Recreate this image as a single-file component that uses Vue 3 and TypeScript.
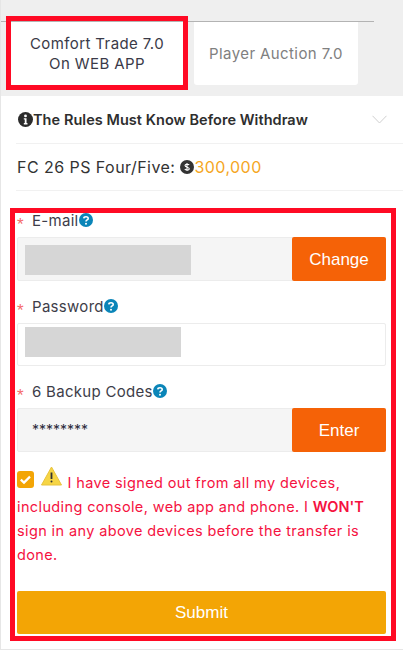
<script setup lang="ts">
import { ref } from "vue";

const activeTab = ref(0);
const tabs = [
  { id: 0, lines: ["Comfort Trade 7.0", "On WEB APP"] },
  { id: 1, lines: ["Player Auction 7.0"] },
];
</script>

<style>
html, body {
  margin: 0;
  background: #fff;
}
</style>

<style scoped>
.page {
  position: relative;
  width: 403px;
  height: 650px;
  overflow: hidden;
  box-sizing: border-box;
  padding-left: 1px;
  background: #e6e6e6;
  font-family: "Inter", "Open Sans", sans-serif;
  color: #333;
}
.top {
  height: 96px;
  box-sizing: border-box;
  background: #efefef;
  padding-top: 21px;
}
.top-inner {
  width: 373px;
  border-top: 1px solid #b3b3b3;
  display: flex;
  gap: 10px;
  padding-left: 9px;
  box-sizing: border-box;
}
.tab {
  flex: none;
  width: 164px;
  height: 63px;
  border-radius: 0 0 3px 3px;
  background: #fff;
  color: #808080;
  font-size: 15px;
  letter-spacing: 0.4px;
  line-height: 20px;
  display: flex;
  flex-direction: column;
  align-items: center;
  justify-content: center;
}
.tab.active {
  width: 174px;
  color: #3a3a48;
}
.panel {
  background: #fff;
  height: 553px;
  padding: 0 0 0 15px;
}
.rules {
  height: 48px;
  display: flex;
  align-items: center;
  border-bottom: 1px solid #f1f1f1;
  box-sizing: border-box;
  padding: 0 16px 0 2px;
  font-weight: 600;
  font-size: 14.5px;
  letter-spacing: 0.05px;
  color: #2e2e2e;
}
.rules svg {
  flex: none;
}
.rules .chev {
  margin-left: auto;
}
.price {
  height: 47px;
  display: flex;
  align-items: center;
  border-bottom: 1px solid #f1f1f1;
  box-sizing: border-box;
  padding-left: 1px;
  font-size: 16px;
  letter-spacing: 0.45px;
}
.price .coin {
  margin-left: 5px;
  flex: none;
}
.price b {
  font-weight: 400;
  color: #f5a623;
}
.form {
  width: 369px;
  margin-left: 1px;
  padding-top: 18px;
}
.label {
  display: flex;
  align-items: center;
  height: 22px;
  font-size: 15px;
  letter-spacing: 0.3px;
  color: #3d3d49;
}
.label i {
  width: 15px;
  height: 15px;
  font-style: normal;
  color: #f56c6c;
  font-size: 17px;
  line-height: 23px;
  font-family: "Liberation Sans", sans-serif;
}
.field {
  height: 44px;
  display: flex;
  box-sizing: border-box;
  margin: 6px 0 14px;
  border: 1px solid #ececec;
  border-radius: 2px;
  background: #f5f5f5;
}
.field.plain {
  background: #fff;
  height: 43px;
}
.blank {
  margin: 7px 0 0 7px;
  height: 30px;
  background: #d6d6d6;
}
.plain .blank {
  margin-top: 3px;
}
.w1 { width: 166px; }
.w2 { width: 156px; }
.code {
  padding: 12px 0 0 14px;
  font-size: 14px;
  color: #2a2a3a;
}
.field button {
  margin: -1px -1px -1px auto;
  width: 94px;
  border: 0;
  border-radius: 2px;
  padding: 2px 0 0;
  background: #f56207;
  color: #fff;
  font-family: "Liberation Sans", sans-serif;
  font-size: 17px;
}
.agree {
  margin: 4px 0 0;
  font-size: 14.5px;
  line-height: 24px;
  letter-spacing: 0.38px;
  color: #f5123f;
}
.agree strong {
  font-weight: 600;
  letter-spacing: 0;
}
.check {
  display: inline-block;
  vertical-align: 0;
  margin-right: 7px;
}
.warn {
  display: inline-block;
  vertical-align: 2px;
  margin-right: 1px;
}
.submit {
  display: block;
  width: 100%;
  height: 43px;
  margin-top: 24px;
  border: 0;
  border-radius: 2px;
  background: #f3a505;
  color: #fff;
  font-family: "Liberation Sans", sans-serif;
  font-size: 17px;
}
.mark {
  position: absolute;
  border: 5px solid #ff0a24;
  box-sizing: border-box;
  pointer-events: none;
}
.mark-tab {
  left: 6px;
  top: 16px;
  width: 182px;
  height: 74px;
}
.mark-form {
  left: 10px;
  top: 208px;
  width: 386px;
  height: 433px;
}
</style>

<template>
  <div class="page">
    <div class="top">
      <div class="top-inner">
        <div v-for="tab in tabs" :key="tab.id" class="tab" :class="{ active: tab.id === activeTab }">
          <span v-for="line in tab.lines" :key="line">{{ line }}</span>
        </div>
      </div>
    </div>
    <div class="panel">
      <div class="rules">
        <svg width="15" height="15" viewBox="0 0 16 16">
          <circle cx="8" cy="8" r="8" fill="#2b2b2b" />
          <circle cx="8" cy="4.2" r="1.5" fill="#fff" />
          <path d="M6.2 6.6h2.9v5.2h1v1.4H6.2v-1.4h1V8H6.2z" fill="#fff" />
        </svg>
        <span>The Rules Must Know Before Withdraw</span>
        <svg class="chev" width="15" height="9" viewBox="0 0 15 9">
          <path d="M.5.8 7.5 8l7-7.2" fill="none" stroke="#cfcfcf" />
        </svg>
      </div>
      <div class="price">
        <span>FC 26 PS Four/Five:</span>
        <svg class="coin" width="14" height="14" viewBox="0 0 14 14">
          <circle cx="7" cy="7" r="7" fill="#333" />
          <path d="M9.2 4.9C8.6 4 5 3.8 5 5.5S9.3 7.1 9.3 8.8 5.4 10.1 4.8 9M7 3v8" fill="none" stroke="#fff" stroke-width="1.1" />
        </svg>
        <b>300,000</b>
      </div>
      <div class="form">
        <div class="label">
          <i>*</i>E-mail
          <svg width="14" height="14" viewBox="0 0 14 14">
            <circle cx="7" cy="7" r="7" fill="#0a85b8" />
            <path d="M4.8 5.4C4.9 3.2 9.2 3.2 9.2 5.4 9.2 7 7 6.9 7 8.6" fill="none" stroke="#fff" stroke-width="1.6" />
            <circle cx="7" cy="10.8" r="1" fill="#fff" />
          </svg>
        </div>
        <div class="field">
          <div class="blank w1"></div>
          <button type="button">Change</button>
        </div>
        <div class="label">
          <i>*</i>Password
          <svg width="14" height="14" viewBox="0 0 14 14">
            <circle cx="7" cy="7" r="7" fill="#0a85b8" />
            <path d="M4.8 5.4C4.9 3.2 9.2 3.2 9.2 5.4 9.2 7 7 6.9 7 8.6" fill="none" stroke="#fff" stroke-width="1.6" />
            <circle cx="7" cy="10.8" r="1" fill="#fff" />
          </svg>
        </div>
        <div class="field plain">
          <div class="blank w2"></div>
        </div>
        <div class="label">
          <i>*</i>6 Backup Codes
          <svg width="14" height="14" viewBox="0 0 14 14">
            <circle cx="7" cy="7" r="7" fill="#0a85b8" />
            <path d="M4.8 5.4C4.9 3.2 9.2 3.2 9.2 5.4 9.2 7 7 6.9 7 8.6" fill="none" stroke="#fff" stroke-width="1.6" />
            <circle cx="7" cy="10.8" r="1" fill="#fff" />
          </svg>
        </div>
        <div class="field">
          <div class="code">********</div>
          <button type="button">Enter</button>
        </div>
        <p class="agree">
          <svg class="check" width="17" height="17" viewBox="0 0 17 17">
            <rect width="17" height="17" rx="3" fill="#f3a505" />
            <path d="M3.8 8.6l3.2 3 6-6" fill="none" stroke="#fff" stroke-width="2.2" />
          </svg>
          <svg class="warn" width="21" height="20" viewBox="0 0 21 20">
            <path d="M10.5 1 20.5 19H.5z" fill="#f6d545" stroke="#e8c33c" stroke-linejoin="round" />
            <path d="M10.5 6.5v6.5" stroke="#333" stroke-width="1.8" />
            <circle cx="10.5" cy="15.6" r="1" fill="#333" />
          </svg>
          I have signed out from all my devices, including console, web app and phone. I <strong>WON'T</strong> sign in any above devices before the transfer is done.
        </p>
        <button type="button" class="submit">Submit</button>
      </div>
    </div>
    <div class="mark mark-tab"></div>
    <div class="mark mark-form"></div>
  </div>
</template>
